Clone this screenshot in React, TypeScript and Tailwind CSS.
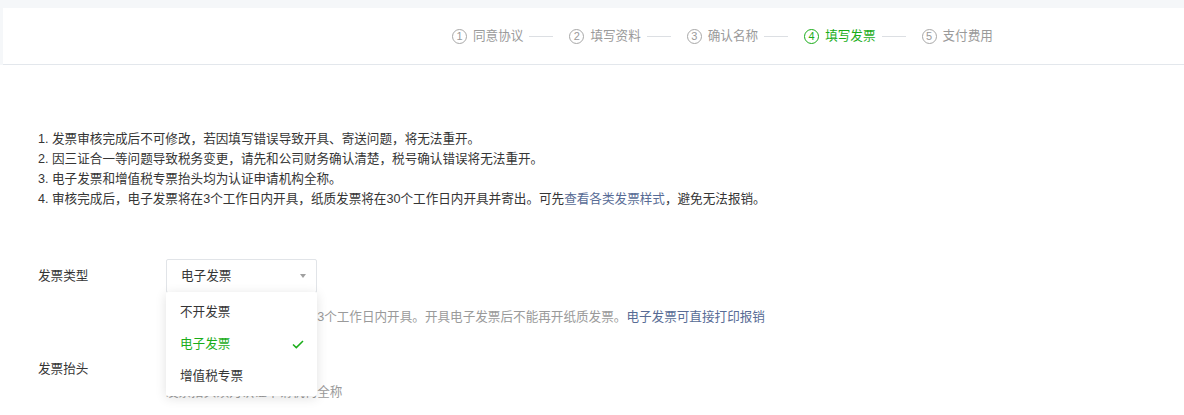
import React from 'react';

const steps = ['同意协议', '填写资料', '确认名称', '填写发票', '支付费用'];
const current = 3;

const notes = [
  '1. 发票审核完成后不可修改，若因填写错误导致开具、寄送问题，将无法重开。',
  '2. 因三证合一等问题导致税务变更，请先和公司财务确认清楚，税号确认错误将无法重开。',
  '3. 电子发票和增值税专票抬头均为认证申请机构全称。',
];

const options = ['不开发票', '电子发票', '增值税专票'];

export default function App() {
  return (
    <div
      className="min-h-[415px] bg-white text-[#353535] text-[12.6px]"
      style={{ fontFamily: '"Liberation Sans", "Noto Sans CJK SC", sans-serif' }}
    >
      {/* steps header */}
      <div className="bg-[#f5f7f9] pt-[8px] pl-[3px]">
        <div className="h-[57px] bg-white border-b border-[#e3e7ec] flex items-center pl-[449px]">
          {steps.map((s, i) => {
            const active = i === current;
            return (
              <React.Fragment key={s}>
                <div className={`flex items-center ${active ? 'text-[#1aad19]' : 'text-[#9a9a9a]'}`}>
                  <span
                    className={`w-[15px] h-[15px] rounded-full border flex items-center justify-center text-[11px] leading-none ${
                      active ? 'border-[#1aad19]' : 'border-[#a8a8a8]'
                    }`}
                  >
                    {i + 1}
                  </span>
                  <span className="ml-[6px] text-[12.6px] leading-none">{s}</span>
                </div>
                {i < steps.length - 1 && (
                  <span className="ml-[6px] mr-[16px] w-[24px] h-px bg-[#dcdfe3]" />
                )}
              </React.Fragment>
            );
          })}
        </div>
      </div>

      <div className="pl-[38px] pt-[64px]">
        {/* notes */}
        <div className="leading-[20px] text-[#353535]">
          {notes.map((n) => (
            <p key={n}>{n}</p>
          ))}
          <p>
            4. 审核完成后，电子发票将在3个工作日内开具，纸质发票将在30个工作日内开具并寄出。可先
            <span className="text-[#576b95]">查看各类发票样式</span>，避免无法报销。
          </p>
        </div>

        {/* form */}
        <div className="mt-[50px]">
          <div className="flex items-center">
            <span className="w-[128px]">发票类型</span>
            <div className="relative">
              <div className="w-[151px] h-[34px] border border-[#e1e4e8] rounded-[2px] flex items-center justify-between pl-[14px] pr-[10px] bg-white">
                <span>电子发票</span>
                <span className="w-0 h-0 border-l-[3px] border-r-[3px] border-t-[4px] border-l-transparent border-r-transparent border-t-[#a0a0a0]" />
              </div>
              <div className="absolute left-0 top-[33px] z-10 w-[151px] bg-white rounded-[2px] py-[4px] shadow-[0_2px_12px_rgba(0,0,0,0.12)]">
                {options.map((o) => {
                  const sel = o === '电子发票';
                  return (
                    <div
                      key={o}
                      className={`h-[32px] flex items-center justify-between pl-[14px] pr-[13px] ${
                        sel ? 'text-[#1aad19]' : 'text-[#353535]'
                      }`}
                    >
                      <span>{o}</span>
                      {sel && (
                        <svg width="12" height="9" viewBox="0 0 12 9" fill="none">
                          <path d="M1 4.5 L4.3 7.6 L11 1" stroke="#1aad19" strokeWidth="1.5" />
                        </svg>
                      )}
                    </div>
                  );
                })}
              </div>
            </div>
          </div>
          <p className="ml-[128px] mt-[15px] leading-[18px] text-[#9a9a9a]">
            审核完成后，电子发票将在3个工作日内开具。开具电子发票后不能再开纸质发票。
            <span className="text-[#576b95]">电子发票可直接打印报销</span>
          </p>

          <div className="flex items-center mt-[33px] h-[20px]">
            <span className="w-[128px]">发票抬头</span>
            <div className="w-[151px] h-[20px]" />
          </div>
          <p className="ml-[128px] mt-[4px] leading-[18px] text-[#9a9a9a]">发票抬头须为认证申请机构全称</p>
        </div>
      </div>
    </div>
  );
}
